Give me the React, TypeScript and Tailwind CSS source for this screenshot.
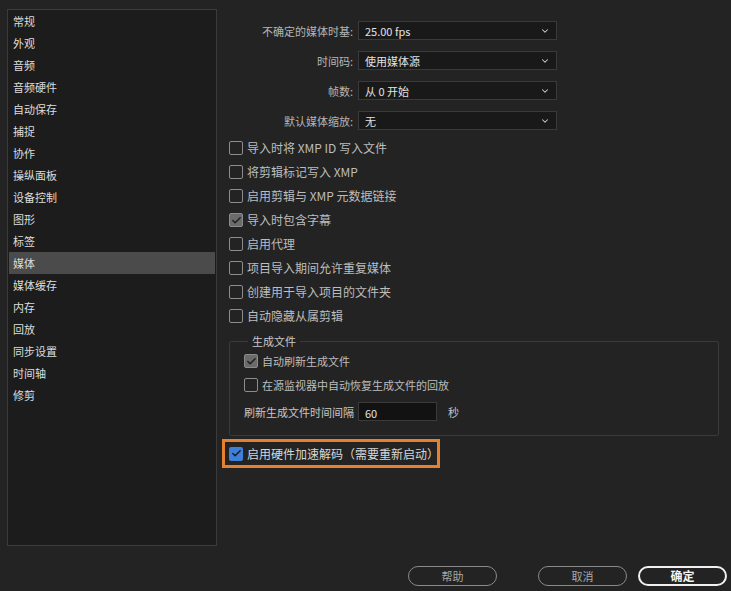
import { ChevronDown, Check } from 'lucide-react';

const sections = [
  '常规', '外观', '音频', '音频硬件', '自动保存', '捕捉', '协作', '操纵面板', '设备控制',
  '图形', '标签', '媒体', '媒体缓存', '内存', '回放', '同步设置', '时间轴', '修剪',
];

const selects = [
  { label: '不确定的媒体时基:', value: '25.00 fps' },
  { label: '时间码:', value: '使用媒体源' },
  { label: '帧数:', value: '从 0 开始' },
  { label: '默认媒体缩放:', value: '无' },
];

const options = [
  { label: '导入时将 XMP ID 写入文件', checked: false },
  { label: '将剪辑标记写入 XMP', checked: false },
  { label: '启用剪辑与 XMP 元数据链接', checked: false },
  { label: '导入时包含字幕', checked: true },
  { label: '启用代理', checked: false },
  { label: '项目导入期间允许重复媒体', checked: false },
  { label: '创建用于导入项目的文件夹', checked: false },
  { label: '自动隐藏从属剪辑', checked: false },
];

function Box({ checked, blue }: { checked: boolean; blue?: boolean }) {
  if (blue) {
    return (
      <span className="flex h-[14px] w-[14px] shrink-0 items-center justify-center rounded-[2px] bg-[#3f7fd9]">
        <Check size={11} strokeWidth={3} className="text-[#101820]" />
      </span>
    );
  }
  return checked ? (
    <span className="flex h-[14px] w-[14px] shrink-0 items-center justify-center rounded-[2px] border border-[#8a8a8a] bg-[#6b6b6b]">
      <Check size={11} strokeWidth={3} className="text-[#1c1c1c]" />
    </span>
  ) : (
    <span className="h-[14px] w-[14px] shrink-0 rounded-[2px] border-[1.5px] border-[#8c8c8c]" />
  );
}

function CheckRow({ label, checked, small }: { label: string; checked: boolean; small?: boolean }) {
  return (
    <div className={`flex h-[24px] items-center gap-[4px] text-[#bdbdbd] ${small ? 'text-[11px]' : ''}`}>
      <Box checked={checked} />
      <span>{label}</span>
    </div>
  );
}

export default function App() {
  return (
    <div
      className="flex h-[591px] w-[731px] flex-col overflow-hidden bg-[#232323] text-[12px] leading-[16px]"
      style={{ fontFamily: '"Noto Sans CJK SC", "Noto Sans", sans-serif' }}
    >
      <div className="flex">
        <div className="ml-[7px] mt-[9px] flex h-[537px] w-[210px] flex-col border border-[#3b3b3b] bg-[#1c1c1c] px-px text-[11px]">
          {sections.map((s) => (
            <div
              key={s}
              className={`flex h-[22px] items-center pl-[4px] text-[#dcdcdc] ${s === '媒体' ? 'bg-[#4b4b4b]' : ''}`}
            >
              {s}
            </div>
          ))}
        </div>

        <div className="ml-[5px] flex flex-col">
          <div className="mt-[21px] flex flex-col gap-[11px] text-[11px]">
            {selects.map((s) => (
              <div key={s.label} className="flex h-[19px] items-center">
                <span className="w-[131px] text-right text-[#b5b5b5]">{s.label}</span>
                <div className="ml-[5px] flex h-[19px] w-[199px] items-center justify-between border border-[#3a3a3a] bg-[#191919] pl-[6px] pr-[6px] text-[#e2e2e2]">
                  <span>{s.value}</span>
                  <ChevronDown size={10} strokeWidth={2.5} className="text-[#cfcfcf]" />
                </div>
              </div>
            ))}
          </div>

          <div className="ml-[7px] mt-[6px] flex flex-col">
            {options.map((o) => (
              <CheckRow key={o.label} {...o} />
            ))}
          </div>

          <fieldset className="ml-[7px] mt-[5px] w-[490px] rounded-[2px] border border-[#3a3a3a] pb-[14px] pl-[14px] text-[11px]">
            <legend className="ml-[4px] px-[4px] text-[#c8c8c8]">生成文件</legend>
            <CheckRow label="自动刷新生成文件" checked small />
            <CheckRow label="在源监视器中自动恢复生成文件的回放" checked={false} small />
            <div className="mt-[5px] flex h-[19px] items-center text-[#c8c8c8]">
              <span className="w-[114px] shrink-0 whitespace-nowrap">刷新生成文件时间间隔</span>
              <div className="flex h-[19px] w-[79px] items-center border border-[#3a3a3a] bg-[#121212] pl-[6px] pt-[2px] text-[#e2e2e2]">
                60
              </div>
              <span className="ml-[11px]">秒</span>
            </div>
          </fieldset>

          <div className="mt-[3px] flex h-[29px] w-[218px] items-center gap-[4px] border-[3px] border-[#e5802f] pl-[4px] text-[#d8d8d8]">
            <Box checked blue />
            <span>启用硬件加速解码（需要重新启动）</span>
          </div>
        </div>
      </div>

      <div className="mt-[20px] flex items-center text-[11px]">
        <button className="ml-[408px] h-[20px] w-[89px] rounded-full border-[1.5px] border-[#8a8a8a] text-[#a8a8a8]">
          帮助
        </button>
        <button className="ml-[41px] h-[20px] w-[89px] rounded-full border-[1.5px] border-[#8a8a8a] text-[#a8a8a8]">
          取消
        </button>
        <button className="ml-[11px] h-[20px] w-[89px] rounded-full border-2 border-[#f0f0f0] text-[12px] font-bold text-[#f4f4f4]">
          确定
        </button>
      </div>
    </div>
  );
}
